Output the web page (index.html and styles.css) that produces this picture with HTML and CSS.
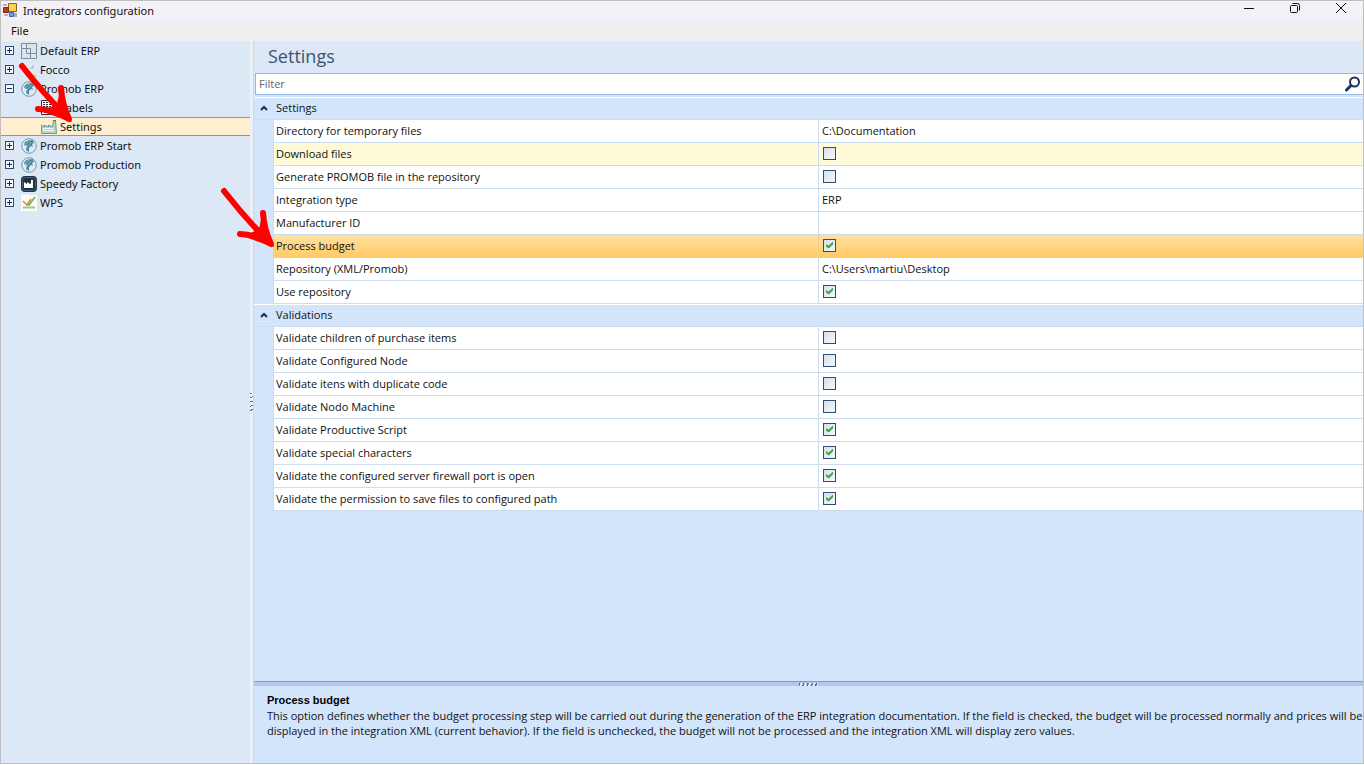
FILE: index.html
```html
<!doctype html>
<html lang="en">
<head>
  <meta charset="utf-8" />
  <meta name="viewport" content="width=device-width, initial-scale=1.0" />
  <title>Integrators configuration</title>
  <link rel="stylesheet" href="styles.css">
</head>
<body>
  <svg class="defs" width="0" height="0" aria-hidden="true">
    <symbol id="globe" viewBox="0 0 16 16">
      <circle cx="8" cy="8" r="7.3" fill="#dfeaf2" stroke="#6d9bb0" stroke-width="1"/>
      <path d="M3 7 4 4 7 2.500 12 2l1 3-2 1 1 3-2-1-2 2v4l-3-2 1-4z" fill="#4f879f"/>
      <path d="M4 7l4-4M6 9l4-5M12 2l1 3" fill="none" stroke="#a9c8d6" stroke-width=".7"/>
    </symbol>
    <symbol id="arrow" viewBox="0 0 56 62">
      <path d="M4 4C15 18 29 35 48 54" fill="none" stroke="#f00" stroke-width="6" stroke-linecap="round"/>
      <path d="M20 47Q34 47 51 57 44 42 43 26" fill="none" stroke="#f00" stroke-width="6" stroke-linecap="round" stroke-linejoin="round"/>
      <path d="M22 49 33 45 39 42 42 28 54 60z" fill="#f00"/>
    </symbol>
  </svg>

  <div class="window">
    <header class="titlebar">
      <svg class="app-icon" width="14" height="14" viewBox="0 0 14 14">
        <path d="M5.500.5h8v8h-8z" fill="#fbd44c" stroke="#8a6a20"/>
        <path d="M.5 4.500h5v5h-5z" fill="#c8321e" stroke="#7a3020"/>
        <path d="M0 1h4v2H0zM1 11h4v2H1z" fill="#b8b8b8"/>
        <path d="M6.500 9.500h4v4h-4z" fill="#6c9cf0" stroke="#4a68b0"/>
        <path d="M11 10h3v4h-3z" fill="#aaa"/>
      </svg>
      <h1>Integrators configuration</h1>
      <div class="window-buttons">
        <button type="button" aria-label="Minimize"><svg width="12" height="12" viewBox="0 0 12 12"><path d="M1 6.500h10"/></svg></button>
        <button type="button" aria-label="Restore"><svg width="12" height="12" viewBox="0 0 12 12"><rect x="1.500" y="3.500" width="7" height="7" rx="1"/><path d="M3.500 1.500h5q2 0 2 2v5"/></svg></button>
        <button type="button" aria-label="Close"><svg width="12" height="12" viewBox="0 0 12 12"><path d="M1 1l10 10M11 1 1 11"/></svg></button>
      </div>
    </header>

    <nav class="menubar">
      <button type="button">File</button>
    </nav>

    <div class="workspace">
      <aside class="sidebar">
        <ul class="tree">
          <li>
            <div class="node">
              <button type="button" class="toggle" aria-label="Expand Default ERP"></button>
              <svg width="16" height="16" viewBox="0 0 16 16" fill="#dce3ea" stroke="#7d8d9a"><path d="M5.500.5h10v10h-10z"/><path d="M.5 5.500h9v10h-9z"/><path d="M5.500 5.500v5h4M.5 5V.5H5M10 15.500h5.500V11" fill="none"/></svg>
              <a href="#">Default ERP</a>
            </div>
          </li>
          <li>
            <div class="node">
              <button type="button" class="toggle" aria-label="Expand Focco"></button>
              <svg width="16" height="16" viewBox="0 0 16 16"><path d="M1 2h9l4 8-4 4-8-4z" fill="#e6eaec"/><path d="M9 7l4-5-1 5z" fill="#b8bdc2"/><path d="M9 10q2 3 6 3v2H9z" fill="#e8c16a"/></svg>
              <a href="#">Focco</a>
            </div>
          </li>
          <li>
            <div class="node">
              <button type="button" class="toggle open" aria-label="Collapse Promob ERP"></button>
              <svg width="16" height="16"><use href="#globe"/></svg>
              <a href="#">Promob ERP</a>
            </div>
            <ul>
              <li>
                <div class="node child">
                  <svg width="16" height="16" viewBox="0 0 16 16" fill="none" stroke="#333"><path d="M.5.5h11v8H.5z" fill="#fff"/><path d="M2 2.500h8M2 4.500h8M2 6.500h8" stroke-dasharray="2 1"/><path d="M.5 8.500h13v6H.5z" fill="#fff"/><path d="M3 12.500h9"/></svg>
                  <a href="#">Labels</a>
                </div>
              </li>
              <li>
                <div class="node child selected">
                  <svg width="16" height="16" viewBox="0 0 16 16"><path d="M.5 14.500V6l3 2V6l4 2V6l4 2 1-6.500h2l1 13z" fill="#b5d6d0" stroke="#6f9a95"/><path d="M2 11.500h11M2 9.500h10" stroke="#eef8f4"/><path d="M12 1.500h3" stroke="#55796f"/></svg>
                  <a href="#" aria-current="page">Settings</a>
                </div>
              </li>
            </ul>
          </li>
          <li>
            <div class="node">
              <button type="button" class="toggle" aria-label="Expand Promob ERP Start"></button>
              <svg width="16" height="16"><use href="#globe"/></svg>
              <a href="#">Promob ERP Start</a>
            </div>
          </li>
          <li>
            <div class="node">
              <button type="button" class="toggle" aria-label="Expand Promob Production"></button>
              <svg width="16" height="16"><use href="#globe"/></svg>
              <a href="#">Promob Production</a>
            </div>
          </li>
          <li>
            <div class="node">
              <button type="button" class="toggle" aria-label="Expand Speedy Factory"></button>
              <svg width="16" height="16" viewBox="0 0 16 16"><rect width="16" height="16" rx="4" fill="#1d3345"/><rect x="1.500" y="1.500" width="13" height="13" rx="3" fill="none" stroke="#48637a"/><path d="M3 12V6l3 2V6l3 2 1-1V4h2v8z" fill="#fff"/></svg>
              <a href="#">Speedy Factory</a>
            </div>
          </li>
          <li>
            <div class="node">
              <button type="button" class="toggle" aria-label="Expand WPS"></button>
              <svg width="16" height="16" viewBox="0 0 16 16" fill="none"><path d="M0 0h16v16H0z" fill="#fbfcf8"/><path d="M2 6l4 4 4-6" stroke="#d98a3d" stroke-width="1.500"/><path d="M7 9l1 1 6-8" stroke="#6fae52" stroke-width="1.500"/><path d="M2 12.500h12" stroke="#a9bd93" stroke-width="2"/></svg>
              <a href="#">WPS</a>
            </div>
          </li>
        </ul>
        <svg class="pointer to-tree" width="56" height="62" aria-hidden="true"><use href="#arrow"/></svg>
        <svg class="pointer to-grid" width="56" height="62" aria-hidden="true"><use href="#arrow"/></svg>
      </aside>

      <div class="splitter"><span class="grip"></span></div>

      <main class="panel">
        <h2>Settings</h2>
        <div class="filter">
          <input type="text" placeholder="Filter" aria-label="Filter">
          <button type="button" aria-label="Search"><svg width="16" height="16" viewBox="0 0 16 16" fill="none" stroke="#1c3560"><circle cx="9.500" cy="6" r="4.500" stroke-width="2"/><path d="M6 9.500 1.500 14" stroke-width="3" stroke-linecap="round"/></svg></button>
        </div>

        <div class="grid">
          <table>
            <colgroup><col class="gutter"><col><col></colgroup>
            <tbody>
              <tr class="group">
                <th><button type="button" aria-label="Collapse Settings"><svg width="8" height="6" viewBox="0 0 8 6"><path d="M1 5l3-3 3 3"/></svg></button></th>
                <th colspan="2">Settings</th>
              </tr>
              <tr><td></td><td>Directory for temporary files</td><td>C:\Documentation</td></tr>
              <tr class="hover"><td></td><td><label for="download">Download files</label></td><td><input type="checkbox" id="download"></td></tr>
              <tr><td></td><td><label for="generate">Generate PROMOB file in the repository</label></td><td><input type="checkbox" id="generate"></td></tr>
              <tr><td></td><td>Integration type</td><td>ERP</td></tr>
              <tr><td></td><td>Manufacturer ID</td><td></td></tr>
              <tr class="active"><td></td><td><label for="budget">Process budget</label></td><td><input type="checkbox" id="budget" checked></td></tr>
              <tr><td></td><td>Repository (XML/Promob)</td><td>C:\Users\martiu\Desktop</td></tr>
              <tr><td></td><td><label for="repository">Use repository</label></td><td><input type="checkbox" id="repository" checked></td></tr>
            </tbody>
            <tbody>
              <tr class="group">
                <th><button type="button" aria-label="Collapse Validations"><svg width="8" height="6" viewBox="0 0 8 6"><path d="M1 5l3-3 3 3"/></svg></button></th>
                <th colspan="2">Validations</th>
              </tr>
              <tr><td></td><td><label for="children">Validate children of purchase items</label></td><td><input type="checkbox" id="children"></td></tr>
              <tr><td></td><td><label for="node">Validate Configured Node</label></td><td><input type="checkbox" id="node"></td></tr>
              <tr><td></td><td><label for="duplicate">Validate itens with duplicate code</label></td><td><input type="checkbox" id="duplicate"></td></tr>
              <tr><td></td><td><label for="machine">Validate Nodo Machine</label></td><td><input type="checkbox" id="machine"></td></tr>
              <tr><td></td><td><label for="script">Validate Productive Script</label></td><td><input type="checkbox" id="script" checked></td></tr>
              <tr><td></td><td><label for="special">Validate special characters</label></td><td><input type="checkbox" id="special" checked></td></tr>
              <tr><td></td><td><label for="firewall">Validate the configured server firewall port is open</label></td><td><input type="checkbox" id="firewall" checked></td></tr>
              <tr><td></td><td><label for="permission">Validate the permission to save files to configured path</label></td><td><input type="checkbox" id="permission" checked></td></tr>
            </tbody>
          </table>
        </div>

        <div class="splitter horizontal"><span class="grip"></span></div>

        <section class="description">
          <h3>Process budget</h3>
          <p>This option defines whether the budget processing step will be carried out during the generation of the ERP integration documentation. If the field is checked, the budget will be processed normally and prices will be displayed in the integration XML (current behavior). If the field is unchecked, the budget will not be processed and the integration XML will display zero values.</p>
        </section>
      </main>
    </div>
  </div>
</body>
</html>
```

FILE: styles.css
```css
* {
  box-sizing: border-box;
}
body {
  margin: 0;
  font-family: "Noto Sans", "Open Sans", sans-serif;
  font-size: 11px;
  color: #111;
}
button {
  padding: 0;
  border: 0;
  background: none;
  font: inherit;
  color: inherit;
}
.defs {
  position: absolute;
}
.window {
  display: flex;
  flex-direction: column;
  height: calc(100vh - 1px);
  border: 1px solid #bfbfbf;
  background: #dce8f6;
}

/* title bar and menu */
.titlebar {
  display: flex;
  align-items: center;
  height: 20px;
  padding: 0 16px 2px 2px;
  background: #f2f1f8;
}
.titlebar h1 {
  flex: 1;
  margin: 0 0 0 6px;
  font-size: 11px;
  font-weight: 400;
}
.window-buttons {
  display: flex;
  gap: 34px;
  align-self: flex-start;
  padding-top: 1px;
}
.window-buttons button,
.window-buttons svg {
  display: block;
  width: 12px;
  height: 12px;
}
.window-buttons svg {
  fill: none;
  stroke: #111;
}
.menubar {
  display: flex;
  height: 20px;
  padding: 0 10px 2px;
  background: #efefef;
}

.workspace {
  flex: 1;
  display: flex;
  min-height: 0;
}

/* integrators tree */
.sidebar {
  position: relative;
  flex: 0 0 249px;
  background: #dce8f6;
}
.tree,
.tree ul {
  margin: 0;
  padding: 0;
  list-style: none;
}
.node {
  display: flex;
  align-items: center;
  height: 19px;
  padding-left: 4px;
  border: solid transparent;
  border-width: 1px 0;
}
.node a {
  margin-left: 3px;
  color: inherit;
  text-decoration: none;
}
.child {
  padding-left: 40px;
}
.selected {
  background: #ffeed0;
  border-color: #d58446;
}
.toggle {
  width: 9px;
  height: 9px;
  margin-right: 7px;
  border: 1px solid #33456b;
  background:
    linear-gradient(#1c2c55, #1c2c55) center / 5px 1px no-repeat,
    linear-gradient(#1c2c55, #1c2c55) center / 1px 5px no-repeat,
    #f4f8fc;
}
.toggle.open {
  background: linear-gradient(#1c2c55, #1c2c55) center / 5px 1px no-repeat, #f4f8fc;
}

/* red arrows drawn over the window */
.pointer {
  position: absolute;
  z-index: 1;
}
.to-tree {
  left: 17px;
  top: 21px;
}
.to-grid {
  left: 219px;
  top: 146px;
}

/* splitters */
.splitter {
  display: flex;
  align-items: center;
  justify-content: center;
  flex: 0 0 4px;
  background: #edf1f5;
  border-right: 1px solid #c6d9f1;
}
.grip {
  width: 3px;
  height: 19px;
  background: repeating-linear-gradient(160deg, #4a6ba5 0 1px, #fff 1px 2px, transparent 2px 4px);
}
.splitter.horizontal {
  flex-basis: 5px;
  background: #b0c9e8;
  border-right: 0;
  border-top: 1px solid #7c9dc4;
}
.horizontal .grip {
  width: 19px;
  height: 3px;
  background: repeating-linear-gradient(110deg, #4a6ba5 0 1px, #fff 2px 3px, transparent 3px 4px);
}

/* settings panel */
.panel {
  flex: 1;
  display: flex;
  flex-direction: column;
  min-width: 0;
  background: #d3e5fb;
  font-family: "Open Sans", "Noto Sans", sans-serif;
}
.panel h2 {
  margin: 0;
  padding: 0 14px 2px;
  background: linear-gradient(#dce8f6 80%, #dfe5f7);
  font-size: 18px;
  font-weight: 400;
  line-height: 30px;
  color: #3c5373;
}
.filter {
  display: flex;
  align-items: center;
  height: 22px;
  margin: 0 0 2px 1px;
  padding: 0 2px 0 3px;
  border: 1px solid #98b9e2;
  border-right: 0;
  background: #fff;
}
.filter input {
  flex: 1;
  min-width: 0;
  padding: 0 0 2px;
  border: 0;
  outline: 0;
  background: none;
  font: inherit;
}
.filter input::placeholder {
  color: #666;
}
.filter svg {
  display: block;
}

.grid {
  flex: 1;
  min-height: 0;
}
.grid table {
  width: 100%;
  table-layout: fixed;
  border-collapse: separate;
  border-spacing: 0;
}
.gutter {
  width: 19px;
}
.grid td,
.grid th {
  height: 23px;
  padding: 0 2px 2px;
  font-weight: 400;
  text-align: left;
  line-height: 15px;
}
.grid td {
  border-left: 1px solid #cbdcef;
  border-bottom: 1px solid #cbdcef;
  background: #fff;
}
.grid td:first-child {
  border-color: transparent;
  background: none;
}
.grid td:last-child {
  padding-left: 3px;
}
.grid th {
  padding-left: 3px;
  border-top: 1px solid #fff;
  border-bottom: 1px solid #cbdcef;
}
.grid th:first-child {
  padding-left: 6px;
}
.grid th button,
.grid th svg {
  display: block;
}
.grid th svg {
  fill: none;
  stroke: #1c2c55;
  stroke-width: 2;
}
.grid .hover td:not(:first-child) {
  background: #fffad9;
}
.grid .active td:not(:first-child) {
  border-color: #f6cf85;
  background: linear-gradient(#ffe1a0, #ffcb66);
}

input[type="checkbox"] {
  appearance: none;
  display: block;
  width: 13px;
  height: 13px;
  margin: 0 0 0 1px;
  border: 1px solid #2c4f78;
  background: linear-gradient(135deg, #d5dfeb, #f6f8fc);
}
input[type="checkbox"]:checked::after {
  content: "";
  display: block;
  width: 7px;
  height: 7px;
  margin: 2px;
  background: #43a047;
  clip-path: polygon(0 35%, 35% 60%, 100% 0, 100% 40%, 40% 100%, 0 70%);
}

/* description of the active option */
.description {
  height: 77px;
  padding: 6px 0 6px 13px;
}
.description h3 {
  margin: 0;
  font-family: "Liberation Sans", Arial, sans-serif;
  font-size: 11px;
  line-height: 16px;
  color: #000;
}
.description p {
  margin: 0;
  line-height: 15px;
}
```
